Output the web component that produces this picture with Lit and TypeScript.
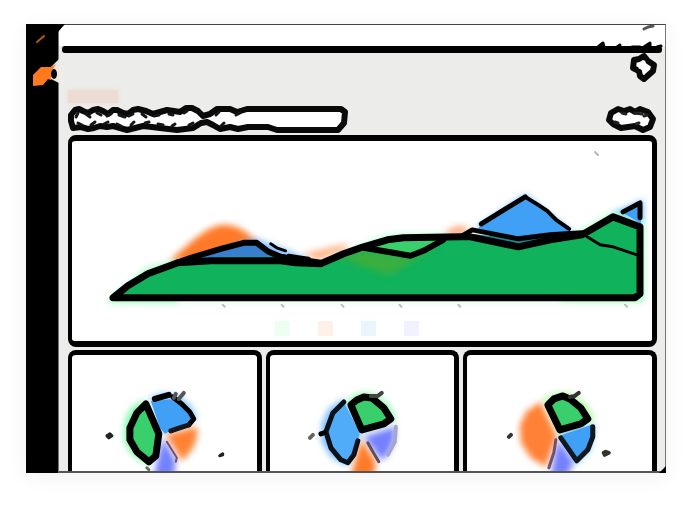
import { LitElement, html, svg, css } from "lit";
import { customElement, property } from "lit/decorators.js";

type Kind = "fill" | "soft" | "line";
interface Shape {
  kind: Kind;
  d: string;
  color: string;
  width?: number;
}

const fill = (d: string, color: string): Shape => ({ kind: "fill", d, color });
const soft = (d: string, color: string): Shape => ({ kind: "soft", d, color });
const line = (d: string, width = 5, color = "#000"): Shape => ({ kind: "line", d, color, width });

const BLUE = "#3fa0f5";
const GREEN = "#38cf6c";
const ORANGE = "#ff8234";
const PURPLE = "#7480ff";

const draw = (shapes: Shape[]) =>
  shapes.map((s) =>
    s.kind === "line"
      ? svg`<path class="line" d=${s.d} stroke=${s.color} stroke-width=${s.width ?? 5}></path>`
      : svg`<path class=${s.kind} d=${s.d} fill=${s.color}></path>`
  );

const shapeStyles = css`
  svg { display: block; }
  .line { fill: none; stroke-linejoin: round; stroke-linecap: round; }
  .soft { filter: blur(3px); }
`;

const BASE = "M112 298 L127 286 L147 274 L177 263 L210 261 L280 261 L295 263 L320 264 L343 254 L363 247 L387 240 L403 238 L460 237 L470 237 L518 247 L550 240 L582 235 L613 217 L640 227 V294 L635 298 Z";

const AREA: Shape[] = [
  soft("M168 262 C193 240 207 226 223 225 C238 225 248 234 258 244 L210 262 Z", "#ff7a28"),
  soft("M302 254 L345 244 L348 248 L318 261 Z", "#ffb78b"),
  soft("M444 232 L457 226 L468 227 L464 236 L448 237 Z", "#ffae86"),
  soft("M236 244 L256 239 L290 252 L310 261 L240 262 Z", "#82bdff"),
  soft("M474 229 L525 194 L575 234 Z", "#79bbff"),
  soft("M612 214 L643 200 V224 Z", "#5cb2ff"),
  soft("M108 300 L145 269 L177 260 V302 H644 V222 L613 212 L582 231 L560 240 V303 H108 Z", "#9dffc4"),
  soft("M350 250 L387 236 L403 235 H446 V250 Z", "#9dffc4"),
  fill(BASE, "#10b25c"),
  soft("M335 256 L363 250 L410 258 L440 245 L388 276 Z", "#39af40"),
  fill("M365 247 L390 241 L443 240 L410 256 Z", "#38cf6c"),
  fill("M190 259 L243 243 L257 243 L280 260 H200 Z", "#397fd0"),
  fill("M196 260 L225 256 H270 L280 261 H200 Z", "#2b92b0"),
  fill("M478 230 L480 224 L525 198 L547 211 L572 233 L518 239 Z", BLUE),
  fill("M470 234 L518 239 L560 236 L518 247 Z", "#1b8794"),
  fill("M622 212 L641 203 V224 Z", BLUE),
  line(BASE, 7),
  line("M176 263 L190 258 L220 249 L243 243 L256 243 L268 252 L280 257 L300 260 L320 263", 6),
  line("M270 244 L276 248 L285 251", 3),
  line("M288 256 L308 259", 4),
  line("M363 248 L387 252 L410 256 L423 251 L443 240", 6),
  line("M481 224 L502 211 L525 197", 5),
  line("M525 197 L538 205 L547 211 L556 220 L569 229", 4),
  line("M460 237 L472 230 L518 239 L550 235 L582 233", 5),
  line("M587 237 L600 245 L613 247 L640 256", 3),
  line("M623 212 L640 203 V218", 5),
  line("M595 152 L598 155", 2, "#b5b5b5"),
  ...[223, 282, 342, 400, 459, 626].map((x) => line(`M${x - 1} 305 L${x + 1} 307`, 2, "#b3c2b9")),
];

const PIE_ONE: Shape[] = [
  soft("M145 399 L131 407 L124 420 L123 440 L130 454 L147 466 Z", "#84f7ad"),
  soft("M149 397 L162 393 L177 395 L190 405 L197 418 L163 434 Z", "#91c8ff"),
  soft("M165 435 L196 427 Q199 445 181 461 Z", ORANGE),
  soft("M162 438 L175 461 L173 477 H153 L156 463 Z", PURPLE),
  fill("M150 401 L175 399 L193 419 L164 434 L159 428 Z", BLUE),
  fill("M145 403 L159 434 L155 457 L148 463 L135 453 L128 440 V428 L135 413 Z", GREEN),
  line("M145 404 L158 434 L155 456 L148 462 L136 452 L129 440 V428 L136 413 Z", 7),
  line("M154 399 L168 395", 6),
  line("M172 397 L181 404 L189 412 L193 419 L188 425", 5),
  line("M188 425 L170 431", 5, "#15191f"),
  line("M173 398 L175 394 M178 399 L183 393", 4, "#555"),
  line("M166 442 L176 458 L175 462", 2, "#765061"),
  line("M106 436 L109 434 L111 436 L108 438 Z M219 456 L222 454 L222 455 Z", 3, "#222"),
  line("M146 468 L148 470", 3, "#557560"),
];

const PIE_TWO: Shape[] = [
  soft("M342 399 L328 409 L321 424 L321 442 L330 457 L346 466 L360 434 Z", "#72b9ff"),
  soft("M346 401 L357 393 L372 393 L388 404 L396 420 L360 434 Z", "#95f6b5"),
  soft("M363 437 L394 427 Q396 446 381 461 Z", PURPLE),
  soft("M361 440 L375 462 L373 477 H350 L356 455 Z", "#ff7a28"),
  fill("M343 402 L332 413 L324 432 L330 448 L340 460 L347 463 L353 455 L359 433 Z", "#50acf8"),
  fill("M349 405 L355 400 L370 397 L392 419 L383 425 L362 431 Z", GREEN),
  line("M343 402 L332 413 L325 432 L330 448 L340 460 L347 463 L353 455 L357 441", 5, "#0b1118"),
  line("M350 405 L356 400 L363 397 L371 398 L383 408 L390 419 L383 424 L361 430 Z", 7),
  line("M370 396 L377 396 L381 393", 4, "#444"),
  line("M320 434 L323 433", 5),
  line("M395 427 L394 442 L387 455", 4, "#a5a7cf"),
  line("M367 443 L372 452 L378 462", 3, "#5c4e5f"),
  line("M309 438 L312 435", 4, "#666"),
];

const PIE_THREE: Shape[] = [
  soft("M541 402 L527 411 L520 425 L521 443 L531 458 L546 467 L557 436 Z", "#ff8135"),
  soft("M543 399 L556 393 L571 393 L587 404 L595 420 L560 434 Z", "#b2f6a5"),
  soft("M560 434 L595 425 L590 450 L576 464 Z", "#5eb7ff"),
  soft("M559 440 L574 463 L567 476 H551 L555 453 Z", PURPLE),
  fill("M560 436 L592 425 V438 L588 450 L577 462 Z", BLUE),
  fill("M547 405 L553 399 L570 397 L590 419 L560 431 Z", GREEN),
  line("M548 405 L554 399 L563 396 L570 399 L581 408 L588 419 L581 424 L560 430 Z", 7),
  line("M570 397 L575 396 L579 393", 4, "#333"),
  line("M561 438 L577 461 L588 450 L593 437 V427", 5, "#101820"),
  line("M556 440 L554 453 L549 468", 3, "#755066"),
  line("M509 437 L511 435 M604 453 L606 452 L609 453 L605 455 Z", 4, "#333"),
];

@customElement("chart-card")
class ChartCard extends LitElement {
  @property({ attribute: false }) shapes: Shape[] = [];
  @property() box = "0 0 100 100";
  @property() label = "";
  static styles = [
    shapeStyles,
    css`
      :host { display: block; background: #fff; border: 5px solid #000; border-left-width: 4px; border-radius: 8px; overflow: hidden; box-sizing: border-box; min-width: 0; }
      svg { width: 100%; }
    `,
  ];
  render() {
    return html`<svg viewBox=${this.box} role="img" aria-label=${this.label}>${draw(this.shapes)}</svg><slot></slot>`;
  }
}

@customElement("app-root")
class AppRoot extends LitElement {
  static styles = [
    shapeStyles,
    css`
      :host { display: block; box-sizing: border-box; padding: 24px 30px 33px 26px; background: #fff; font-family: "Liberation Sans", sans-serif; }
      .window { display: flex; position: relative; box-shadow: 0 4px 20px rgba(0, 0, 0, 0.06); }
      .side { flex: none; width: 32px; background: #000; }
      .side svg { position: relative; z-index: 1; overflow: visible; }
      .main { flex: 1; min-width: 0; background: #ececea; border: 1px solid #777; border-top-color: #444; border-bottom: 2px solid #555; box-sizing: border-box; }
      .top { display: flex; justify-content: flex-end; height: 21px; background: #fff; }
      .top svg { overflow: visible; }
      .rule { height: 7px; margin: 0 3px; background: #000; border-radius: 3px; }
      .content { display: flex; flex-direction: column; padding: 0 8px 0 9px; }
      .head { display: flex; justify-content: space-between; align-items: flex-end; height: 51px; }
      .tag { width: 50px; height: 13px; margin-bottom: 1px; background: #eddcd3; box-shadow: 0 0 4px #eddcd3; }
      .tools { display: flex; justify-content: space-between; height: 31px; }
      button { border: 0; padding: 0; margin: 0; background: none; }
      .action { align-self: flex-start; }
      .action svg { overflow: visible; }
      .area { border-width: 6px 5px 6px 4px; }
      .legend { display: flex; justify-content: center; gap: 28px; padding: 10px 30px 5px 0; }
      .key { width: 15px; height: 15px; }
      .green { background: #edfff3; }
      .orange { background: #fff0e8; }
      .blue { background: #e9f5ff; }
      .violet { background: #f1f1ff; }
      .pies { display: grid; grid-template-columns: repeat(3, 1fr); gap: 4px; margin-top: 3px; }
      .pie { border-bottom: 0; border-radius: 8px 8px 0 0; }
      .corner { position: absolute; right: 0; bottom: 0; }
    `,
  ];

  render() {
    return html`
      <div class="window">
        <nav class="side" aria-label="Main">
          <svg width="32" height="70" viewBox="26 24 32 70">
            <path d="M58 24 H65 L58 32 Z" fill="#000"></path>
            <path d="M59 59 L51 67 V79 L59 83 Z" fill="#efe5df"></path>
            <path d="M33 75 L41 67 H51 L56 64 L51 72 V80 L48 79 L43 85 L33 86 Z" fill="#ff7a1f"></path>
            <ellipse cx="54" cy="74" rx="3" ry="5" fill="#000"></ellipse>
            ${draw([line("M37 42 L44 36", 2, "#b4581c")])}
          </svg>
        </nav>
        <main class="main">
          <div class="top">
            <svg width="70" height="21" viewBox="595 25 70 21">
              ${draw([
                line("M598 47 L603 43 L604 47 M617 47 L620 45 M632 47 H640 M644 47 L650 43 V47 M657 47 L661 46", 3),
                line("M644 29 L648 27 L653 26", 3, "#555"),
              ])}
            </svg>
          </div>
          <div class="rule"></div>
          <div class="content">
            <div class="head">
              <div class="tag"></div>
              <button class="action" aria-label="Options">
                <svg width="25" height="30" viewBox="635 53 25 30">
                  <path d="M647 56 L651 61 L657 65 L656 71 L647 79 L643 76 L642 71 L636 68 L637 60 L642 59 Z" fill="#fff" stroke="#090909" stroke-width="6" stroke-linejoin="round"></path>
                  <path d="M640 63 L645 64 L648 60 L649 65 L654 67 L650 70 L647 75 L645 70 L641 68 L643 66 Z" fill="#fff"></path>
                </svg>
              </button>
            </div>
            <div class="tools">
              <button aria-label="Filter">
                <svg width="282" height="31" viewBox="68 104 282 31">
                  <path d="M71 121 L71 115 L75 110 L79 109 L83 111 L88 113 L93 110 L98 109 L103 111 L108 114 L113 110 L117 110 L123 113 L128 114 L133 110 L138 109 L146 111 L153 114 L160 112 L167 110 L174 111 L180 112 L186 108 L192 108 L198 111 L203 116 L210 114 L217 109 L230 109 L237 112 L247 109 H341 L345 112 L344 123 L338 130 H277 L268 127 L248 127 L238 129 L230 127 L220 129 L213 125 L207 122 L201 123 L193 128 L177 130 L160 128 L152 127 L143 126 L135 128 L127 130 L120 128 L113 126 L107 127 L100 126 L94 128 L88 129 L81 127 L73 128 Z" fill="#fff" stroke="#0a0a0a" stroke-width="6" stroke-linejoin="round"></path>
                  ${draw([
                    line("M76 117 L78 113 M86 114 L90 117 M97 113 L101 115 M107 116 L111 114 M119 115 L125 117 M129 116 L133 114 M142 114 L146 117 M154 116 L159 115 M169 114 L173 115 M184 113 L187 111 M78 123 L82 125 M91 125 L95 122 M104 124 L108 122 M117 124 L121 126 M131 125 L134 122 M145 123 L149 122 M158 124 L163 125 M172 126 L175 124 M189 125 L193 123 M216 115 L219 112 M221 126 L224 123 M236 115 L240 113", 3, "#161616"),
                  ])}
                </svg>
              </button>
              <button aria-label="Range">
                <svg width="52" height="31" viewBox="607 104 52 31">
                  <path d="M611 120 L613 113 L620 109 L626 111 L632 109 L637 112 L642 109 L650 112 L655 119 L652 127 L645 130 L637 126 L630 127 L623 128 L615 124 Z" fill="#fff" stroke="#0a0a0a" stroke-width="6" stroke-linejoin="round"></path>
                  ${draw([line("M624 113 L628 114 M637 113 L644 114 M646 116 L649 115 M617 122 L620 123 M641 123 L638 124", 3, "#222")])}
                </svg>
              </button>
            </div>
            <chart-card class="area" box="71 141 581 170" label="Area chart" .shapes=${AREA}>
              <div class="legend">
                <span class="key green"></span><span class="key orange"></span><span class="key blue"></span><span class="key violet"></span>
              </div>
            </chart-card>
            <div class="pies">
              <chart-card class="pie" box="71 355 185 117" label="Pie chart one" .shapes=${PIE_ONE}></chart-card>
              <chart-card class="pie" box="269 355 185 117" label="Pie chart two" .shapes=${PIE_TWO}></chart-card>
              <chart-card class="pie" box="467 355 185 117" label="Pie chart three" .shapes=${PIE_THREE}></chart-card>
            </div>
          </div>
        </main>
        <svg class="corner" width="7" height="7" viewBox="0 0 7 7"><path d="M7 0 V7 H0 Z" fill="#000"></path></svg>
      </div>
    `;
  }
}
